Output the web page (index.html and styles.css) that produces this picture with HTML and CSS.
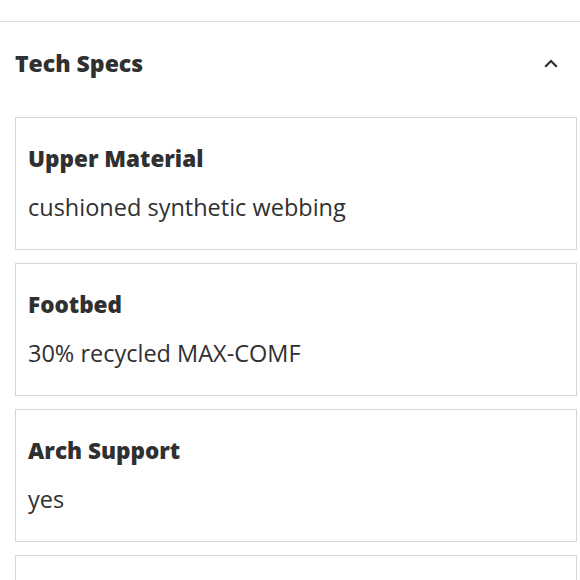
FILE: index.html
```html
<!DOCTYPE html>
<html lang="en">
<head>
<meta charset="utf-8">
<title>Tech Specs</title>
<link rel="stylesheet" href="styles.css">
</head>
<body>
<section class="specs">
  <div class="specs-header">
    <h2 class="specs-title">Tech Specs</h2>
    <svg class="chevron" width="14" height="9" viewBox="0 0 14 9" aria-hidden="true">
      <path d="M1.2 7.8 L7 2 L12.8 7.8" fill="none" stroke="#2f2f2f" stroke-width="2.2"/>
    </svg>
  </div>
  <div class="spec-list">
    <div class="spec-card">
      <div class="spec-name">Upper Material</div>
      <div class="spec-value">cushioned synthetic webbing</div>
    </div>
    <div class="spec-card">
      <div class="spec-name">Footbed</div>
      <div class="spec-value">30% recycled MAX-COMF</div>
    </div>
    <div class="spec-card">
      <div class="spec-name">Arch Support</div>
      <div class="spec-value">yes</div>
    </div>
    <div class="spec-card"></div>
  </div>
</section>
</body>
</html>
```
FILE: styles.css
```css
html, body {
  margin: 0;
  padding: 0;
  background: #ffffff;
}
body {
  font-family: "Open Sans", "Noto Sans", "Liberation Sans", sans-serif;
  color: #303030;
}
.specs {
  margin-top: 21px;
  border-top: 1px solid #dcdcdc;
}
.specs-header {
  display: flex;
  align-items: center;
  justify-content: space-between;
  padding: 25px 22px 38px 15px;
}
.specs-title {
  margin: 0;
  font-size: 23px;
  line-height: 32px;
  font-weight: 800;
}
.chevron {
  display: block;
}
.spec-list {
  display: flex;
  flex-direction: column;
  gap: 13px;
  padding: 0 3px 0 15px;
}
.spec-card {
  border: 1px solid #d6d6d6;
  height: 133px;
  box-sizing: border-box;
  padding: 26px 12px 0 12px;
}
.spec-name {
  font-size: 22.5px;
  line-height: 30px;
  font-weight: 800;
}
.spec-value {
  margin-top: 18px;
  font-size: 23.5px;
  line-height: 30px;
  font-weight: 400;
}
```
